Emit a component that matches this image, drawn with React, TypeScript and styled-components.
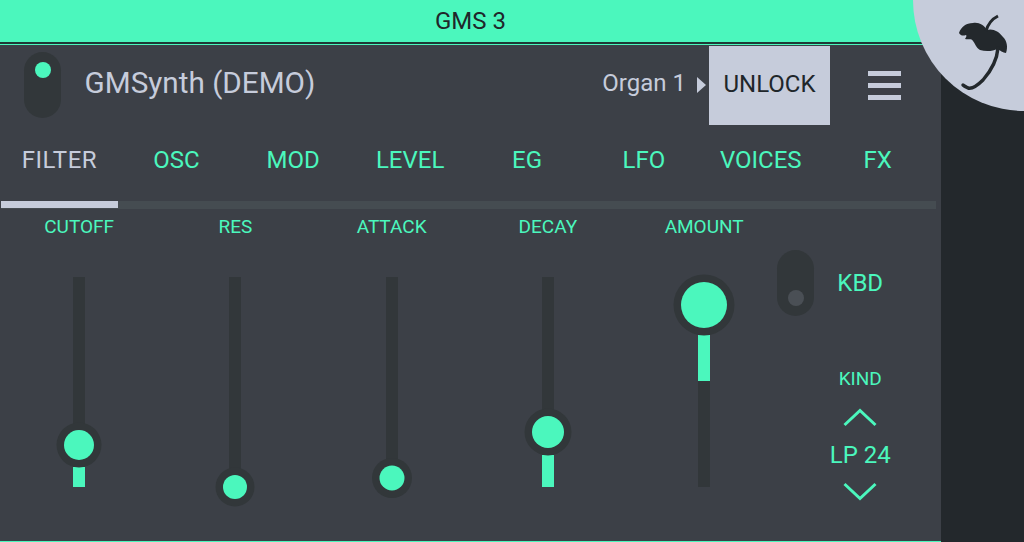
import * as React from 'react';
import styled, { createGlobalStyle } from 'styled-components';

const MINT = '#4bf7bd';
const PANEL = '#3c4047';
const WELL = '#32373a';
const LIGHT = '#c6ccdb';
const SIDE = '#23282c';

const GlobalStyle = createGlobalStyle`
  html, body {
    margin: 0;
    padding: 0;
    background: ${SIDE};
  }
  * {
    box-sizing: border-box;
  }
`;

const Screen = styled.div`
  position: relative;
  width: 1024px;
  height: 542px;
  overflow: hidden;
  display: flex;
  font-family: Roboto, sans-serif;
  background: ${SIDE};
`;

const Panel = styled.div`
  width: 941px;
  height: 542px;
  display: flex;
  flex-direction: column;
  background: ${PANEL};
  border-bottom: 1px solid ${MINT};
`;

const TitleBar = styled.div`
  height: 45px;
  flex: none;
  display: flex;
  align-items: center;
  justify-content: center;
  padding-bottom: 3px;
  background: ${MINT};
  border-bottom: 1px solid ${MINT};
  box-shadow: inset 0 -2px 0 #1f3a36;
  color: #20262a;
  font-size: 24px;
`;

const Header = styled.div`
  height: 80px;
  flex: none;
  display: flex;
  align-items: center;
  padding-left: 24px;
`;

const Switch = styled.div<{ $on?: boolean }>`
  width: 37px;
  height: 66px;
  flex: none;
  border-radius: 19px;
  background: ${WELL};
  display: flex;
  flex-direction: column;
  align-items: center;
  justify-content: ${(p) => (p.$on ? 'flex-start' : 'flex-end')};
  padding: 10px 0;
`;

const SwitchDot = styled.div<{ $on?: boolean }>`
  width: 16px;
  height: 16px;
  border-radius: 50%;
  background: ${(p) => (p.$on ? MINT : '#4a4f55')};
`;

const SynthName = styled.div`
  margin-left: 23.5px;
  padding-bottom: 6px;
  color: ${LIGHT};
  font-size: 29.7px;
  flex: 1;
`;

const Preset = styled.div`
  color: ${LIGHT};
  font-size: 24px;
  margin-right: 11px;
  padding-bottom: 4px;
`;

const PresetArrow = styled.div`
  width: 0;
  height: 0;
  margin-right: 3px;
  border-style: solid;
  border-width: 8.5px 0 8.5px 9px;
  border-color: transparent transparent transparent ${LIGHT};
`;

const UnlockButton = styled.div`
  width: 121px;
  height: 79px;
  margin-top: 1px;
  padding-bottom: 3px;
  display: flex;
  align-items: center;
  justify-content: center;
  background: ${LIGHT};
  color: #20262a;
  font-size: 24px;
`;

const Burger = styled.div`
  width: 33px;
  margin: 0 40px 0 38px;
  display: flex;
  flex-direction: column;
  gap: 7px;
`;

const BurgerBar = styled.div`
  height: 5px;
  background: ${LIGHT};
`;

const Tabs = styled.div`
  height: 76px;
  flex: none;
  display: flex;
  padding-left: 1px;
`;

const Tab = styled.div<{ $active?: boolean }>`
  width: 116.9px;
  flex: none;
  display: flex;
  align-items: center;
  justify-content: center;
  padding-bottom: 7px;
  font-size: 24px;
  letter-spacing: ${(p) => (p.$active ? '0.5px' : '0')};
  color: ${(p) => (p.$active ? LIGHT : MINT)};
`;

const TabRail = styled.div`
  height: 8px;
  width: 935px;
  margin-left: 1px;
  flex: none;
  background: #454c51;
`;

const TabRailActive = styled.div`
  width: 117px;
  height: 7px;
  background: ${LIGHT};
`;

const Controls = styled.div`
  flex: 1;
  display: flex;
  padding-left: 1px;
`;

const Channel = styled.div`
  width: 156.25px;
  flex: none;
  display: flex;
  flex-direction: column;
  align-items: center;
`;

const ChannelLabel = styled.div`
  height: 38px;
  margin-top: 7px;
  line-height: 22px;
  color: ${MINT};
  font-size: 19px;
`;

const Track = styled.div`
  position: relative;
  width: 12px;
  height: 210px;
  margin-top: 23px;
  background: ${WELL};
`;

const Fill = styled.div`
  position: absolute;
  left: 0;
  width: 100%;
  background: ${MINT};
`;

const Thumb = styled.div<{ $r: number; $ring: number }>`
  position: absolute;
  left: 50%;
  width: ${(p) => p.$r * 2}px;
  height: ${(p) => p.$r * 2}px;
  transform: translate(-50%, -50%);
  border-radius: 50%;
  background: ${MINT};
  box-shadow: 0 0 0 ${(p) => p.$ring}px ${WELL};
`;

const SideColumn = styled.div`
  flex: 1;
  margin-left: -5px;
  padding-top: 41px;
  display: flex;
  flex-direction: column;
`;

const KbdRow = styled.div`
  display: flex;
  align-items: center;
`;

const KbdLabel = styled.div`
  width: 91px;
  margin-left: 0.5px;
  text-align: center;
  color: ${MINT};
  font-size: 24px;
`;

const KindBox = styled.div`
  width: 62px;
  margin: 52px 0 0 52px;
  display: flex;
  flex-direction: column;
  align-items: center;
  color: ${MINT};
`;

const KindLabel = styled.div`
  font-size: 19px;
  line-height: 22px;
`;

const KindValue = styled.div`
  font-size: 24px;
  line-height: 30px;
  white-space: nowrap;
  margin: 12px 0 11px;
`;

const Chevron = styled.svg`
  display: block;
  flex: none;
  width: 34px;
  height: 20px;
  fill: none;
  stroke: ${MINT};
  stroke-width: 3;
`;

const LogoDisc = styled.div`
  position: absolute;
  left: 913px;
  top: -111px;
  width: 222px;
  height: 222px;
  border-radius: 50%;
  background: ${LIGHT};
`;

const Logo = styled.svg`
  position: absolute;
  left: 955px;
  top: 10px;
  width: 60px;
  height: 85px;
`;

const tabs = ['FILTER', 'OSC', 'MOD', 'LEVEL', 'EG', 'LFO', 'VOICES', 'FX'];

const TRACK_TOP = 277;

const channels = [
  { label: 'CUTOFF', y: 445, r: 15, ring: 7.5, fillTop: 467, fillBottom: 487 },
  { label: 'RES', y: 487, r: 12, ring: 7.5 },
  { label: 'ATTACK', y: 478, r: 12.5, ring: 7.5 },
  { label: 'DECAY', y: 432, r: 16, ring: 7.5, fillTop: 455, fillBottom: 487 },
  { label: 'AMOUNT', y: 305, r: 23, ring: 7.5, fillTop: 335, fillBottom: 381 },
];

const App = () => {
  return (
    <Screen>
      <GlobalStyle />
      <Panel>
        <TitleBar>GMS 3</TitleBar>
        <Header>
          <Switch $on>
            <SwitchDot $on />
          </Switch>
          <SynthName>GMSynth (DEMO)</SynthName>
          <Preset>Organ 1</Preset>
          <PresetArrow />
          <UnlockButton>UNLOCK</UnlockButton>
          <Burger>
            <BurgerBar />
            <BurgerBar />
            <BurgerBar />
          </Burger>
        </Header>
        <Tabs>
          {tabs.map((t, i) => (
            <Tab key={t} $active={i === 0}>
              {t}
            </Tab>
          ))}
        </Tabs>
        <TabRail>
          <TabRailActive />
        </TabRail>
        <Controls>
          {channels.map((c) => (
            <Channel key={c.label}>
              <ChannelLabel>{c.label}</ChannelLabel>
              <Track>
                {c.fillTop !== undefined && c.fillBottom !== undefined && (
                  <Fill
                    style={{
                      top: c.fillTop - TRACK_TOP,
                      height: c.fillBottom - c.fillTop,
                    }}
                  />
                )}
                <Thumb $r={c.r} $ring={c.ring} style={{ top: c.y - TRACK_TOP }} />
              </Track>
            </Channel>
          ))}
          <SideColumn>
            <KbdRow>
              <Switch>
                <SwitchDot />
              </Switch>
              <KbdLabel>KBD</KbdLabel>
            </KbdRow>
            <KindBox>
              <KindLabel>KIND</KindLabel>
              <Chevron viewBox="0 0 34 20" style={{ marginTop: 18 }}>
                <path d="M1.5 17 L17 2.5 L32.5 17" />
              </Chevron>
              <KindValue>LP 24</KindValue>
              <Chevron viewBox="0 0 34 20">
                <path d="M1.5 3 L17 17.5 L32.5 3" />
              </Chevron>
            </KindBox>
          </SideColumn>
        </Controls>
      </Panel>
      <LogoDisc />
      <Logo viewBox="955 10 60 85">
        <path
          d="M959 33 C961 27 966 23 973 23 C979 22 984 25 987 30 C992 28 999 31 1003 37 C1007 41 1008 47 1006 53 C1003 53 1000 50 997 49 C994 51 986 52 980 50 C976 48 975 43 973 41 C971 38 969 40 965 39 C966 37 967 36 966 35 C963 36 961 36 959 33 Z"
          fill="#23282c"
        />
        <path
          d="M986 31 C988 24 992 19 998 16"
          fill="none"
          stroke="#23282c"
          strokeWidth="3"
        />
        <path
          d="M998 48 C997 60 990 72 983 80 C978 85 972 89 968 88 C966 87 964 86 963 85"
          fill="none"
          stroke="#23282c"
          strokeWidth="3.4"
          strokeLinecap="round"
        />
      </Logo>
    </Screen>
  );
};

export default App;
